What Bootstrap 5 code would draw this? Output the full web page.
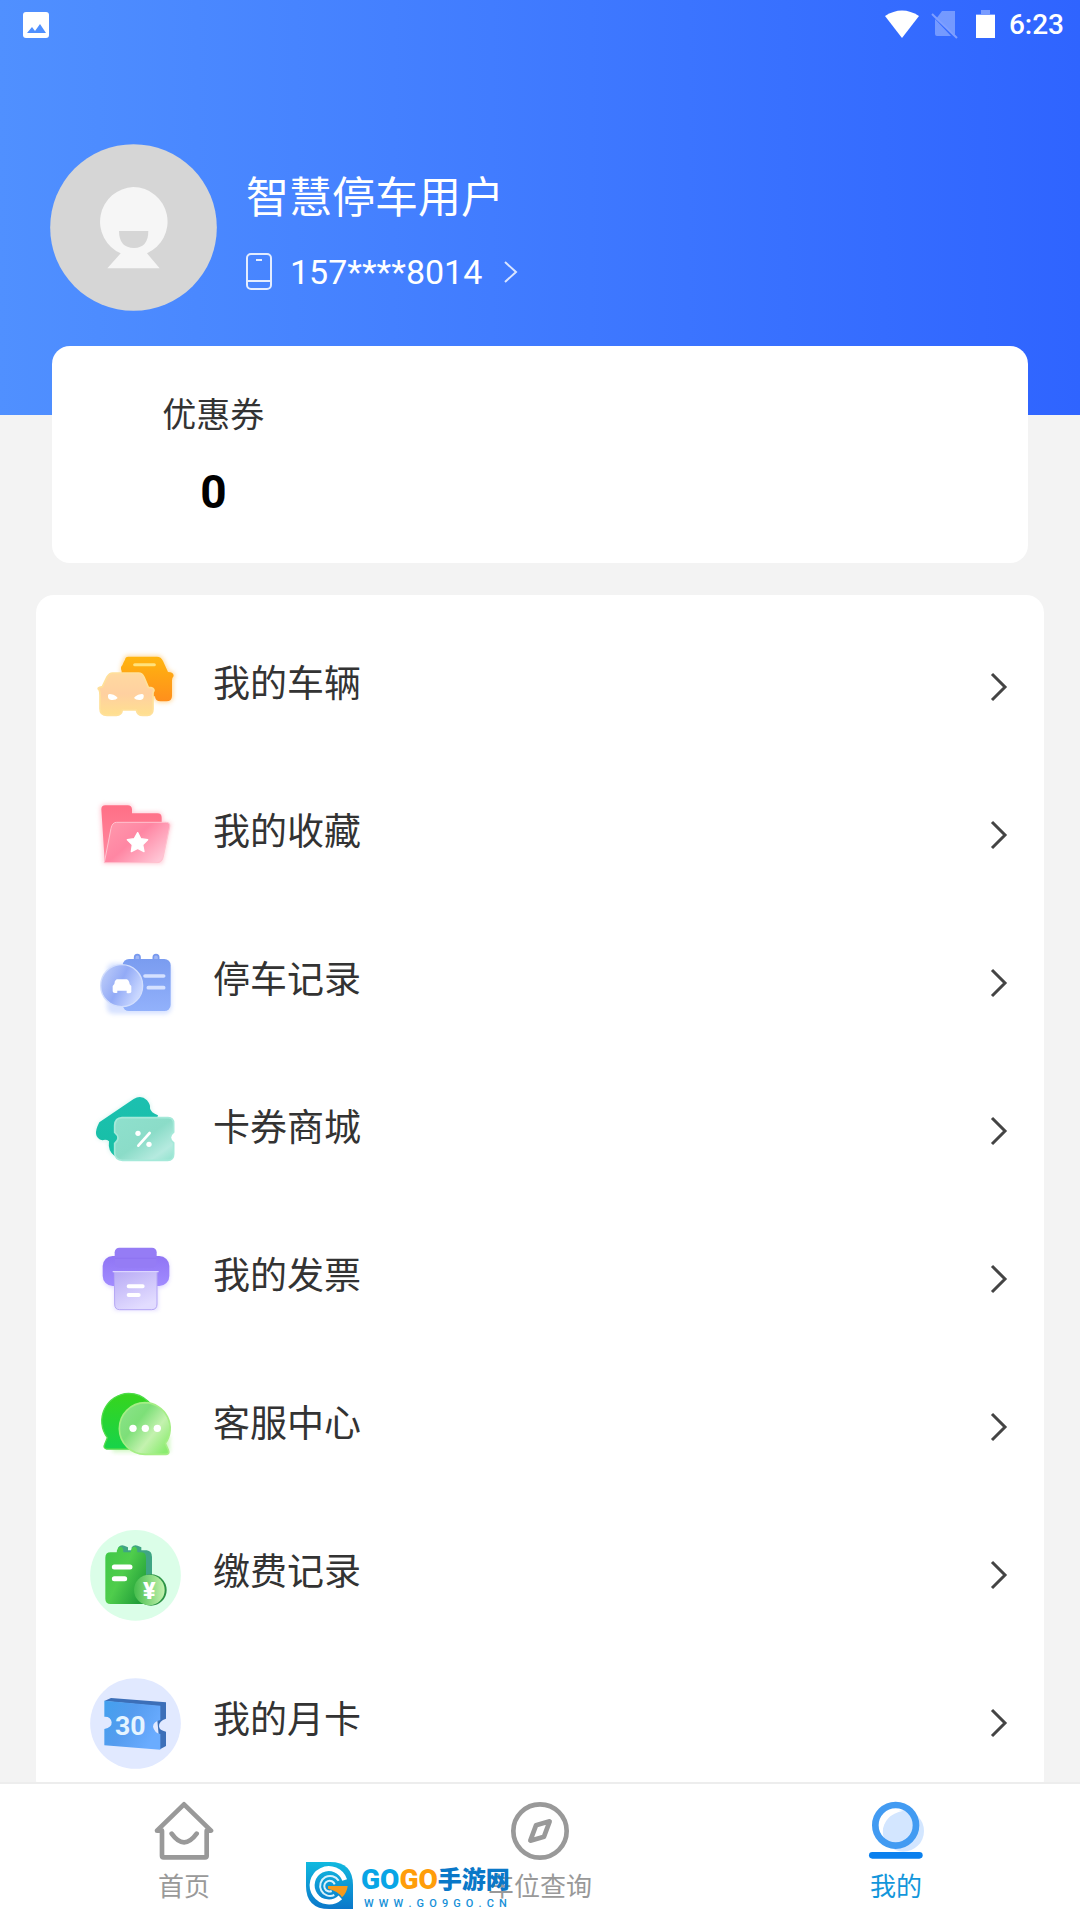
<!DOCTYPE html>
<html lang="zh-CN">
<head>
<meta charset="utf-8">
<meta name="viewport" content="width=device-width, initial-scale=1">
<title>我的</title>
<link rel="stylesheet" href="https://cdn.jsdelivr.net/npm/bootstrap@5.3.0/dist/css/bootstrap.min.css">
<style>
body{background:#f3f3f3;font-family:Roboto,"Noto Sans CJK SC",sans-serif;color:#333}
a{text-decoration:none;color:inherit}
svg{display:block;flex:none}
.hero{background:linear-gradient(90deg,#5090ff,#2f64ff);padding-bottom:104px;margin-bottom:-69px}
.status{height:48px;padding:2px 16px 0 20px}
.clock{font-size:28px;font-weight:500;line-height:28px;margin-left:14px}
.profile{padding:96px 50px 0;gap:29px}
.profile-text{padding-top:10px}
.user-name{font-size:43px;line-height:52px;font-weight:400}
.user-phone{font-size:34px;line-height:44px;gap:18px;margin-top:26px}
.coupon{margin:0 52px;border-radius:18px;padding:44px 0 44px}
.coupon-name{font-size:34px;line-height:50px}
.coupon-num{font-size:46px;line-height:54px;font-weight:700;color:#000;margin-top:25px}
.menu{margin:32px 36px 0;border-radius:18px;padding-top:18px}
.menu-row{height:148px;padding:0 36px 0 54px;gap:32px}
.menu-text{font-size:37px;line-height:48px;padding-bottom:4px}
.tabs{border-top:2px solid #ededed;height:138px;padding:17px 6px 0}
.tab-item{color:#999;font-size:26px;line-height:36px;gap:8px}
.tab-item.on{color:#1296db}
.stamp{left:306px;bottom:11px;gap:8px}
.stamp-title{line-height:36px;height:36px}
.stamp-latin{font-weight:900;font-size:28px}
.stamp-cn{font-size:24px;font-weight:900;color:#0a78c8}
.c-blue{color:#08a5e6}.c-orange{color:#ff9d0a}
.stamp-url{font-size:11px;line-height:11px;font-weight:500;color:#1690d8;padding:0 3px}
</style>
<script src="https://cdn.jsdelivr.net/npm/bootstrap@5.3.0/dist/js/bootstrap.bundle.min.js"></script>
</head>
<body>
<div class="d-flex flex-column vh-100 overflow-hidden">
<header class="hero text-white">
  <div class="status d-flex align-items-center">
    <svg class="me-auto" width="30" height="28" viewBox="0 0 30 28"><rect x="3" y="1" width="26" height="26" rx="3" fill="#fff"/><path d="M7 22l5-6 3 4 5-7 6 9z" fill="#5090ff"/></svg>
    <svg width="110" height="30" viewBox="0 0 110 30"><path d="M0 6Q17-5 34 6L17 28z" fill="#fff"/><path d="M51 9l6-8h13v24zM50 9l16 17H52q-2 0-2-2z" fill="#fff" opacity=".32"/><path d="M47 4l25 24" stroke="#7f9fff" stroke-width="2"/><path d="M96 0h9v4h5v2H91V4h5z" fill="#fff" opacity=".35"/><path d="M91 5h19v23H91z" fill="#fff"/></svg>
    <span class="clock">6:23</span>
  </div>
  <div class="profile d-flex align-items-center">
    <svg width="167" height="167" viewBox="60 71 501 501" role="img" aria-label="头像"><circle cx="310.500" cy="321.500" r="250" fill="#d6d6d6"/><path d="M310 200a104 104 0 0 1 41 199l38 45H232l40-45A104 104 0 0 1 310 200z" fill="#f6f6f6"/><path d="M267 332h88q0 50-43 51-45-1-45-51z" fill="#d6d6d6"/></svg>
    <div class="profile-text">
      <h1 class="user-name m-0">智慧停车用户</h1>
      <a class="user-phone d-flex align-items-center" href="#phone">
        <svg width="26" height="37" viewBox="0 0 26 37" fill="none" stroke="#fff" stroke-width="2" opacity=".85"><rect x="1" y="1" width="24" height="35" rx="4"/><path d="M1 28h24M10 7h6"/></svg>
        <span>157****8014</span>
        <svg class="ms-1" width="14" height="22" viewBox="0 0 14 22" fill="none" stroke="#fff" stroke-width="2" opacity=".8"><path d="M1 1l11 10L1 21"/></svg>
      </a>
    </div>
  </div>
</header>
<section class="coupon bg-white position-relative">
  <div class="row g-0 pe-2"><a class="col-4 text-center" href="#coupon"><div class="coupon-name">优惠券</div><div class="coupon-num">0</div></a></div>
</section>
<main class="flex-grow-1 overflow-hidden">
<div class="menu bg-white">
<a class="menu-row d-flex align-items-center" href="#car">
  <svg width="91" height="91" viewBox="30 35 273 273"><defs><linearGradient id="o1" x2="0" y2="1"><stop stop-color="#ffb50f"/><stop offset="1" stop-color="#ff8f1c"/></linearGradient><linearGradient id="o2" x2="0" y2="1"><stop stop-color="#ffd9a0"/><stop offset=".5" stop-color="#ffd0a0"/><stop offset="1" stop-color="#ffe08f"/></linearGradient><filter id="soft" x="-20%" y="-20%" width="140%" height="140%"><feGaussianBlur stdDeviation="6"/></filter></defs>
  <path d="M145 79h86q12 0 18 13l15 33q17 0 17 12-5 5-5 13v47q0 16-17 16h-17q-17 0-17-15H125v-75q3-27 10-35 1-9 10-9z" fill="#ffc56a" stroke="#ffc56a" stroke-width="8" filter="url(#soft)" opacity=".6"/>
  <path d="M145 79h86q12 0 18 13l15 33q17 0 17 12-5 5-5 13v47q0 16-17 16h-17q-17 0-17-15H125v-75q-5-13 2-18 5-13 8-17 1-9 10-9z" fill="url(#o1)"/><path d="M164 103h59" stroke="#ffe27c" stroke-width="9" stroke-linecap="round"/>
  <path d="M98 128h78q10 0 16 12l13 31q18 0 17 10-4 4-3 13v42q0 19-17 19h-14q-16 0-19-16h-42q-2 16-18 16H81q-21 0-21-20v-40q0-13-3-17-8-6 10-9l14-29q7-12 17-12z" fill="url(#o2)" stroke="#ffe09a" stroke-width="5"/><path d="M84 194q3-5 10-2 14 3 19 11-5 7-19 6-12-2-10-15zM191 194q-3-5-10-2-14 3-19 11 5 7 19 6 12-2 10-15z" fill="#fff"/></svg>
  <span class="menu-text me-auto">我的车辆</span>
  <svg width="18" height="30" viewBox="0 0 18 30"><path d="M2 2l13 13L2 28" fill="none" stroke="#444" stroke-width="3"/></svg></a>
<a class="menu-row d-flex align-items-center" href="#fav">
  <svg width="91" height="91" viewBox="30 480 273 273"><defs><linearGradient id="p1" x2="0" y2="1"><stop stop-color="#ff6f86"/><stop offset="1" stop-color="#ff8aa2"/></linearGradient><linearGradient id="p2" x2="1" y2=".7"><stop stop-color="#ff9aad"/><stop offset=".5" stop-color="#ff86a3"/><stop offset="1" stop-color="#ffc5d5"/></linearGradient></defs>
  <path d="M64 538q0-12 12-12h67q12 0 13 12v12h76q13 0 13 13v15l25 4-25 115H74z" fill="#ff9fb2" stroke="#ff9fb2" stroke-width="8" filter="url(#soft)" opacity=".5"/><path d="M64 538q0-12 12-12h67q12 0 13 12v12h76q13 0 13 13v130H74z" fill="url(#p1)"/><path d="M109 577h148q15 0 12 14l-20 92q-4 15-18 15H73l20-103q4-18 16-18z" fill="url(#p2)" stroke="#ffc2cf" stroke-width="3"/><path d="M173 608l9 18 21 3-15 15 4 21-19-10-19 10 3-21-15-15 21-3z" fill="#fff" stroke="#fff" stroke-width="4" stroke-linejoin="round"/></svg>
  <span class="menu-text me-auto">我的收藏</span>
  <svg width="18" height="30" viewBox="0 0 18 30"><path d="M2 2l13 13L2 28" fill="none" stroke="#444" stroke-width="3"/></svg></a>
<a class="menu-row d-flex align-items-center" href="#parking">
  <svg width="91" height="91" viewBox="30 24 273 273"><defs><linearGradient id="b1" x2="0" y2="1"><stop stop-color="#7a9cf0"/><stop offset="1" stop-color="#92b1fb"/></linearGradient><linearGradient id="b2" x2="1" y2=".5"><stop stop-color="#c5d3fa"/><stop offset=".55" stop-color="#92aaf6"/><stop offset="1" stop-color="#c9d7ff"/></linearGradient></defs>
  <rect x="80" y="100" width="195" height="152" rx="20" fill="#9db8ff" filter="url(#soft)" opacity=".4"/><path d="M164 94V82q0-8 8-8t8 8v12M220 94V82q0-8 8-8t8 8v12" fill="#9fb6f5" stroke="#7899ee" stroke-width="5"/><rect x="128" y="87" width="144" height="156" rx="19" fill="url(#b1)"/><circle cx="125" cy="167" r="63" fill="url(#b2)" stroke="#d2defd" stroke-width="4"/><path d="M195 138h56M205 173h46" stroke="#d5e1ff" stroke-width="11" stroke-linecap="round"/><path d="M110 148h30q7 2 9 15l5 5v18q-2 5-14 3v-7h-28v6q-14 3-14-4v-16l5-6q0-10 7-14z" fill="#fff"/></svg>
  <span class="menu-text me-auto">停车记录</span>
  <svg width="18" height="30" viewBox="0 0 18 30"><path d="M2 2l13 13L2 28" fill="none" stroke="#444" stroke-width="3"/></svg></a>
<a class="menu-row d-flex align-items-center" href="#mall">
  <svg width="91" height="91" viewBox="30 469 273 273"><defs><linearGradient id="t1" x2="0" y2="1"><stop stop-color="#1cc0b0"/><stop offset="1" stop-color="#17bfa5"/></linearGradient><linearGradient id="t2" x2="1" y2="1"><stop stop-color="#8fe0cd"/><stop offset=".5" stop-color="#8bdcc8"/><stop offset=".8" stop-color="#b5eadf"/><stop offset="1" stop-color="#90e3ce"/></linearGradient></defs>
  <path d="M58 578l103-70q22-14 40 4 11 14 10 24 0 17 20 22l-20 110-108 10q-20-10-18-43-10-5-17-3-33-8-10-54z" fill="#8be0d0" filter="url(#soft)" opacity=".4"/><path d="M58 578l103-70q22-14 40 4 11 14 9 24 2 13 24 21l-35 111-96 10q-20-14-16-43-8-7-20-3-33-8-9-54z" fill="url(#t1)"/><path d="M126 564h138q17 0 17 18v25q-20 16 0 33v33q0 19-18 19H128q-23-1-24-22v-29q20-16 0-33v-21q1-22 22-23z" fill="url(#t2)" stroke="#a5e9d9" stroke-width="5"/><path d="M175 648l34-38" stroke="#fff" stroke-width="8" stroke-linecap="round"/><circle cx="174" cy="611" r="8" fill="#fff"/><circle cx="207" cy="644" r="8" fill="#fff"/></svg>
  <span class="menu-text me-auto">卡券商城</span>
  <svg width="18" height="30" viewBox="0 0 18 30"><path d="M2 2l13 13L2 28" fill="none" stroke="#444" stroke-width="3"/></svg></a>
<a class="menu-row d-flex align-items-center" href="#invoice">
  <svg width="91" height="91" viewBox="30 44 273 273"><defs><linearGradient id="v1" x2="0" y2="1"><stop stop-color="#9075f4"/><stop offset="1" stop-color="#a18bff"/></linearGradient><linearGradient id="v2" x2=".5" y2="1"><stop stop-color="#b8abf5"/><stop offset="1" stop-color="#e2dcff"/></linearGradient></defs>
  <path d="M98 115h140q30 0 30 30v25q0 35-34 35v68H104v-68q-34 0-34-35v-25q0-30 28-30z" fill="#b9a9ff" filter="url(#soft)" opacity=".45"/><rect x="68" y="110" width="200" height="90" rx="30" fill="url(#v1)"/><rect x="104" y="85" width="126" height="60" rx="14" fill="#957cf5"/><path d="M105 117h124" stroke="#8b70ee" stroke-width="2"/><path d="M103 157h128v97q0 17-16 17H119q-15 0-15-17z" fill="url(#v2)" stroke="#b5a7f5" stroke-width="3"/><path d="M98 157h138" stroke="#dcd5ff" stroke-width="4"/><path d="M146 201h42M146 227h30" stroke="#fff" stroke-width="12" stroke-linecap="round"/></svg>
  <span class="menu-text me-auto">我的发票</span>
  <svg width="18" height="30" viewBox="0 0 18 30"><path d="M2 2l13 13L2 28" fill="none" stroke="#444" stroke-width="3"/></svg></a>
<a class="menu-row d-flex align-items-center" href="#service">
  <svg width="91" height="91" viewBox="30 489 273 273"><defs><linearGradient id="g1" x2="0" y2="1"><stop stop-color="#37d51d"/><stop offset="1" stop-color="#17d34a"/></linearGradient><linearGradient id="g2" x2="1" y2=".8"><stop stop-color="#8de48d"/><stop offset=".4" stop-color="#7ddf78"/><stop offset=".7" stop-color="#c4f2af"/><stop offset="1" stop-color="#8bec70"/></linearGradient></defs>
  <path d="M80 650h190v50H100z" fill="#90ef70" filter="url(#soft)" opacity=".4"/><path d="M146 523a83 83 0 0 1 0 167H80q-12-3-6-14l8-20A83 83 0 0 1 146 523z" fill="url(#g1)" stroke="#4fdc4a" stroke-width="4"/><path d="M195 551a77 77 0 0 1 61 122l9 20q5 12-7 13h-62a77 77 0 0 1-1-155z" fill="url(#g2)" stroke="#a5ee85" stroke-width="5"/><g fill="#fff"><circle cx="159" cy="628" r="11"/><circle cx="196" cy="628" r="11"/><circle cx="232" cy="628" r="11"/></g></svg>
  <span class="menu-text me-auto">客服中心</span>
  <svg width="18" height="30" viewBox="0 0 18 30"><path d="M2 2l13 13L2 28" fill="none" stroke="#444" stroke-width="3"/></svg></a>
<a class="menu-row d-flex align-items-center" href="#payments">
  <svg width="91" height="91" viewBox="30 62 273 273"><defs><linearGradient id="k1" x2="1" y2=".7"><stop stop-color="#3fc847"/><stop offset=".5" stop-color="#4fcd4c"/><stop offset="1" stop-color="#229f39"/></linearGradient><linearGradient id="k2" x2="1"><stop stop-color="#45bd4c"/><stop offset="1" stop-color="#c3f2ae"/></linearGradient></defs>
  <circle cx="166.500" cy="198" r="136" fill="#dbfee8"/><path d="M115 128v-14q7-9 18-5l11 5v14M155 128v-14q7-9 18-5l11 5v14M110 123h90q16 2 16 20v60l-20 30z" fill="#3fa583"/><path d="M92 129h18q2-18 12-17 8 1 8 17h22q2-18 12-17 8 1 8 17h11q15 0 15 16v139H92q-16 0-16-16V145q0-16 16-16z" fill="url(#k1)"/><path d="M103 173h47M103 208h31" stroke="#fff" stroke-width="15" stroke-linecap="round"/><circle cx="213" cy="242" r="47" fill="#2b9345"/><circle cx="208" cy="242" r="46" fill="url(#k2)"/><text x="208" y="268" text-anchor="middle" font-family="Roboto,sans-serif" font-weight="900" font-size="70" fill="#fff">¥</text></svg>
  <span class="menu-text me-auto">缴费记录</span>
  <svg width="18" height="30" viewBox="0 0 18 30"><path d="M2 2l13 13L2 28" fill="none" stroke="#444" stroke-width="3"/></svg></a>
<a class="menu-row d-flex align-items-center" href="#monthly">
  <svg width="91" height="91" viewBox="30 507 273 273"><defs><linearGradient id="m1" x2="1" y2=".5"><stop stop-color="#42a0ee"/><stop offset=".5" stop-color="#559cef"/><stop offset="1" stop-color="#6aacff"/></linearGradient></defs>
  <circle cx="166.500" cy="643.500" r="136" fill="#e1e9ff"/><path d="M73 576l20-9 165 13v49q-21 6-21 23 1 13 21 16v43l-18 10-12-130z" fill="#3c6fb8"/><path d="M73 575l168 15v43q-21 5-22 20 4 18 22 22v47l-168-13v-49q23-4 22-20-2-18-22-17z" fill="url(#m1)"/><text x="151" y="678" text-anchor="middle" font-family="Roboto,sans-serif" font-weight="700" font-size="80" fill="#e5f4ff">30</text></svg>
  <span class="menu-text me-auto">我的月卡</span>
  <svg width="18" height="30" viewBox="0 0 18 30"><path d="M2 2l13 13L2 28" fill="none" stroke="#444" stroke-width="3"/></svg></a>
</div>
</main>
<nav class="tabs bg-white d-flex position-relative flex-shrink-0">
  <a class="tab-item flex-fill w-100 d-flex flex-column align-items-center" href="#home">
    <svg width="60" height="60" viewBox="42 93 180 180" fill="none" stroke="#999" stroke-width="14" stroke-linejoin="round" stroke-linecap="round"><path d="M66 182H51l81-79 81 79h-13v76q0 4-5 4H71q-5 0-5-4zM95 191q37 52 75 0"/></svg>首页</a>
  <a class="tab-item flex-fill w-100 d-flex flex-column align-items-center" href="#search">
    <svg width="60" height="60" viewBox="30 93 180 180" fill="none" stroke="#999" stroke-width="14" stroke-linejoin="round"><circle cx="120" cy="183" r="80"/><path d="M149 154l-41 12-17 46 41-12z"/></svg>车位查询</a>
  <a class="tab-item on flex-fill w-100 d-flex flex-column align-items-center" href="#me" aria-current="page">
    <svg width="60" height="60" viewBox="1098 93 180 180"><circle cx="1210" cy="183" r="62" fill="#d3e6ff"/><path d="M1140 190q-8-70 70-68-60 12-63 68z" fill="#fff"/><circle cx="1187" cy="166" r="61" fill="none" stroke="#429bf2" stroke-width="20"/><path d="M1117 256h141" stroke="#0a80ee" stroke-width="20" stroke-linecap="round"/></svg>我的</a>
  <div class="stamp position-absolute d-flex align-items-center">
    <svg width="47" height="47" viewBox="500 276 141 141"><defs><linearGradient id="s1" x2="0" y2="1"><stop stop-color="#10b9df"/><stop offset="1" stop-color="#0b77ca"/></linearGradient></defs><path d="M500 276h72q69 0 69 70v71h-71q-70 0-70-70z" fill="url(#s1)"/><path d="M616 330A50 50 0 1 0 603 382" fill="none" stroke="#fff" stroke-width="15"/><path d="M598 332A30 30 0 1 0 585 375M586 343a16 16 0 1 0-9 20" fill="none" stroke="#d9f1fb" stroke-width="6"/><path d="M566 348h59q-2 20-17 34-10-18-42-26z" fill="#f79a1b"/></svg>
    <div>
      <div class="stamp-title d-flex align-items-center"><span class="stamp-latin"><span class="c-blue">GO</span><span class="c-orange">GO</span></span><span class="stamp-cn">手游网</span></div>
      <div class="stamp-url d-flex justify-content-between"><span>W</span><span>W</span><span>W</span><span>.</span><span>G</span><span>O</span><span>9</span><span>G</span><span>O</span><span>.</span><span>C</span><span>N</span></div>
    </div>
  </div>
</nav>
</div>
</body>
</html>
